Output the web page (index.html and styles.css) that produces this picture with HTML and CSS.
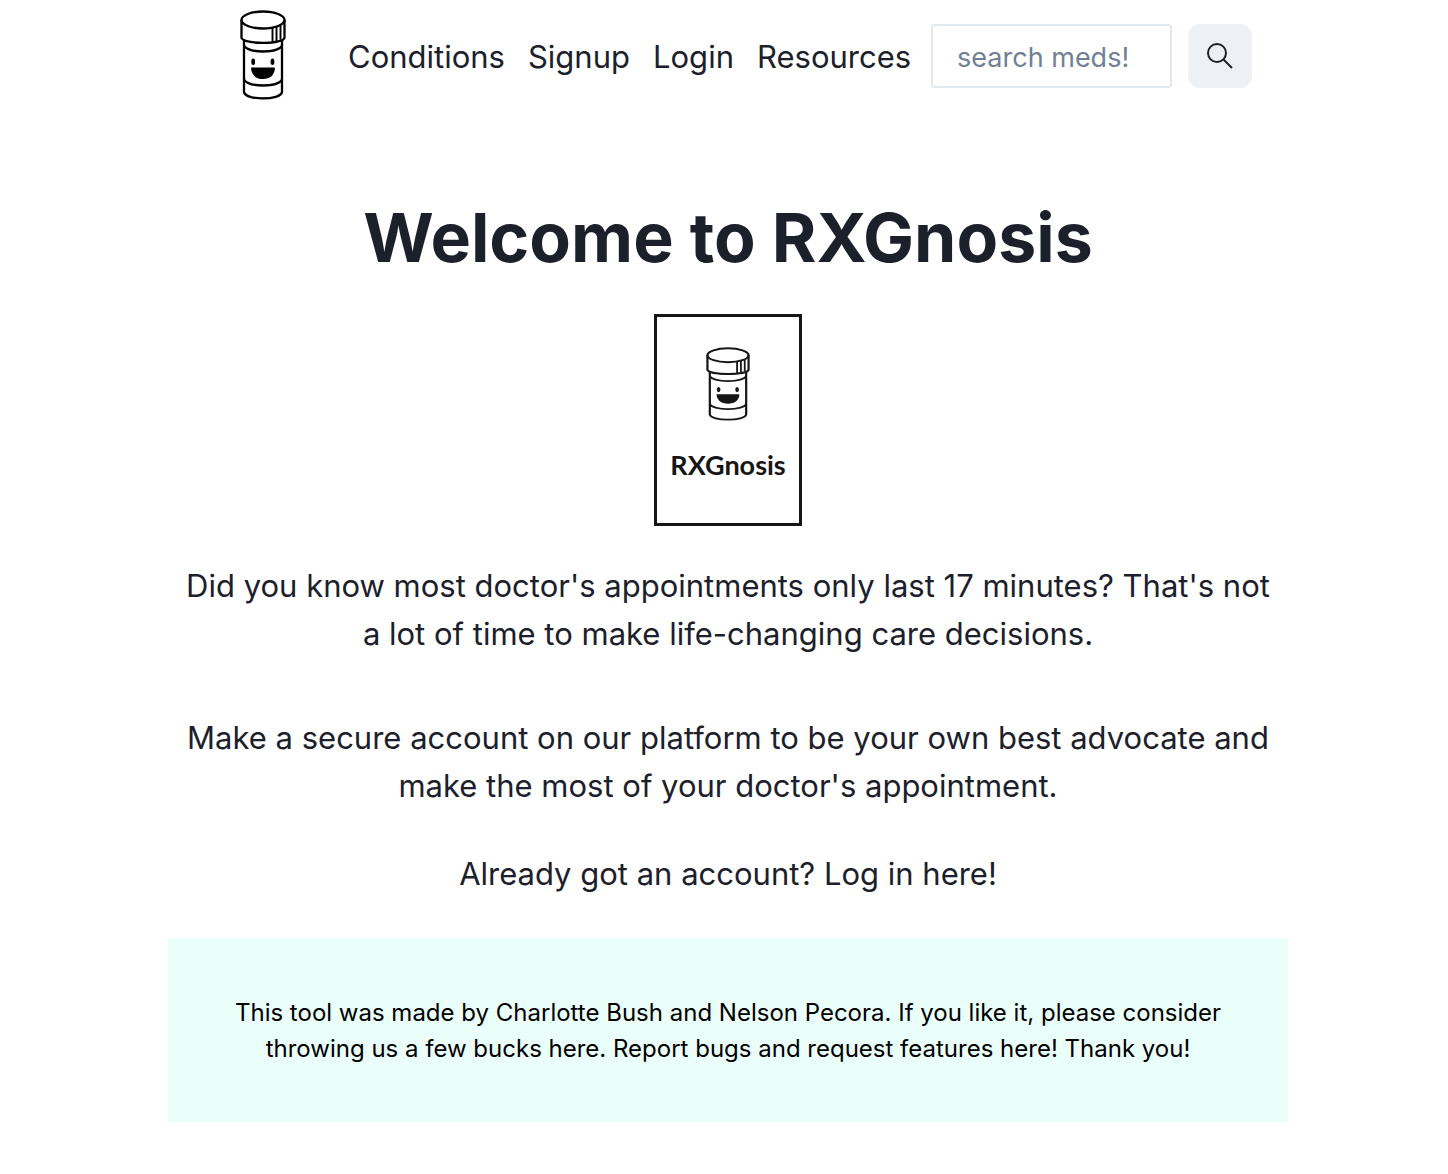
FILE: index.html
```html
<!DOCTYPE html>
<html lang="en">
<head>
<meta charset="utf-8">
<title>RXGnosis</title>
<link rel="stylesheet" href="styles.css">
</head>
<body>
<svg class="sprite" aria-hidden="true">
  <symbol id="bottle" viewBox="0 0 46 90" preserveAspectRatio="none">
    <g fill="none" stroke="currentColor" stroke-width="2.3">
      <path d="M4 29.500V82C5 90.500 41 90.500 42 82V29.500"/>
      <path d="M4 35.500C8 43.500 38 43.500 42 35.500"/>
      <path d="M4 69.500C8 77.500 38 77.500 42 69.500"/>
      <path d="M1.500 10V28C5 34.500 41 34.500 44.500 28V10"/>
      <ellipse cx="23" cy="10" rx="21.500" ry="8.500"/>
      <path stroke-width="1.900" d="M32.500 18V31.500M36.500 17V31M40.500 15.500V29.500"/>
    </g>
    <g fill="currentColor">
      <path d="M11.500 57.500h22.500q1 0 1 1c-1 7-5 10.500-12 10.500s-11-3.500-12-10.500q0-1 .5-1z"/>
      <ellipse cx="13.200" cy="51.700" rx="1.900" ry="3.200"/>
      <ellipse cx="32.500" cy="51.700" rx="1.900" ry="3.200"/>
    </g>
  </symbol>
</svg>
<div class="page">
  <header class="header">
    <a class="logo" href="#" aria-label="RXGnosis home"><svg class="logo-mark"><use href="#bottle"/></svg></a>
    <nav class="nav">
      <a href="#">Conditions</a>
      <a href="#">Signup</a>
      <a href="#">Login</a>
      <a href="#">Resources</a>
    </nav>
    <form class="search">
      <input class="search-input" type="text" placeholder="search meds!" aria-label="Search meds">
      <button class="search-button" type="button" aria-label="Search">
        <svg class="search-icon" viewBox="0 0 26 26"><circle cx="10" cy="10" r="9"/><path d="M16.500 16.500l8.500 8.500"/></svg>
      </button>
    </form>
  </header>
  <main class="main">
    <h1 class="title">Welcome to RXGnosis</h1>
    <div class="card">
      <svg class="card-mark"><use href="#bottle"/></svg>
      <span class="card-name">RXGnosis</span>
    </div>
    <p class="intro">Did you know most doctor's appointments only last 17 minutes? That's not a lot of time to make life-changing care decisions.</p>
    <p class="pitch"><a href="#">Make a secure account</a> on our platform to be your own best advocate and make the most of your doctor's appointment.</p>
    <p class="account">Already got an account? <a href="#">Log in here!</a></p>
  </main>
  <footer class="footer">
    <p>This tool was made by <a href="#">Charlotte Bush</a> and <a href="#">Nelson Pecora</a>. If you like it, please consider throwing us a few bucks <a href="#">here</a>. Report bugs and request features <a href="#">here</a>! Thank you!</p>
  </footer>
</div>
</body>
</html>
```

FILE: styles.css
```css
* { box-sizing: border-box; }
body {
  margin: 0;
  padding: 0 0 52px 8px;
  background: #fff;
  color: #1c202b;
  font: 31px/48px Inter, sans-serif;
}
a { color: inherit; text-decoration: none; }
p, h1 { margin: 0; }
.sprite { position: absolute; width: 0; height: 0; }
.page { max-width: 1120px; margin: 0 auto; }
.header { display: flex; align-items: center; padding: 10px 36px 10px 72px; }
.logo { display: flex; margin-right: 62px; color: #000; }
.logo-mark { width: 46px; height: 90px; }
.nav { display: flex; gap: 23px; margin-right: 20px; padding-top: 4px; }
.search { display: flex; gap: 16px; flex: 1; min-width: 0; padding-top: 2px; }
.search-input {
  flex: 1;
  width: 100%;
  min-width: 0;
  height: 64px;
  padding: 2px 24px 0;
  border: 2px solid #e2e8f0;
  border-radius: 4px;
  color: inherit;
  font: 27px/42px Inter, sans-serif;
}
.search-input::placeholder { color: #718096; opacity: 1; }
.search-button {
  display: flex;
  flex: none;
  align-items: center;
  justify-content: center;
  width: 64px;
  height: 64px;
  padding: 0;
  border: 0;
  border-radius: 12px;
  background: #edf1f6;
  color: #1c202b;
}
.search-icon { width: 26px; height: 26px; fill: none; stroke: currentColor; stroke-width: 2; }
.main { display: flex; flex-direction: column; align-items: center; padding: 82px 16px 40px; text-align: center; }
.title { font-size: 68px; line-height: 90px; font-weight: 700; }
.card {
  display: flex;
  flex-direction: column;
  align-items: center;
  width: 148px;
  margin: 32px 0 36px;
  padding: 30px 0 34px;
  border: 3px solid #161616;
  color: #161616;
}
.card-mark { width: 44px; height: 74px; }
.card-name { margin-top: 20px; font: 700 27px/48px Lato, sans-serif; }
.pitch { margin-top: 56px; }
.account { margin-top: 40px; }
.footer { padding: 57px 64px 55px; background: #eafefa; color: #000; font-size: 24px; line-height: 36px; text-align: center; }
```
